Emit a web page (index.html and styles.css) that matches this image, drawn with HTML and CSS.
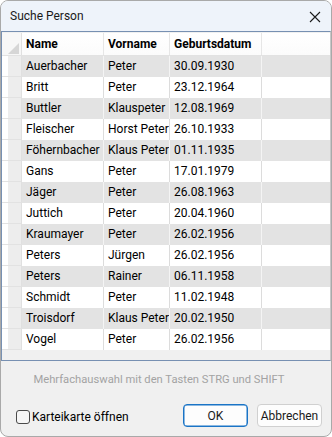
FILE: index.html
```html
<!DOCTYPE html>
<html lang="de">
<head>
<meta charset="utf-8">
<title>Suche Person</title>
<link rel="stylesheet" href="styles.css">
</head>
<body>
<div class="window">
  <div class="titlebar">
    <span class="title">Suche Person</span>
    <svg class="close" width="12" height="12" viewBox="0 0 12 12"><path d="M1 1 L11 11 M11 1 L1 11" stroke="#1b1b1b" stroke-width="1.1" fill="none"/></svg>
  </div>
  <div class="grid">
    <div class="row hdr">
      <div class="rh"><svg class="tri" width="11" height="11" viewBox="0 0 11 11"><path d="M11 0 L11 11 L0 11 Z" fill="#d6d6d6"/></svg></div>
      <div class="c">Name</div><div class="c">Vorname</div><div class="c">Geburtsdatum</div><div class="c f"></div>
    </div>
    <div class="row alt"><div class="rh"></div><div class="c">Auerbacher</div><div class="c">Peter</div><div class="c">30.09.1930</div><div class="c f"></div></div>
    <div class="row"><div class="rh"></div><div class="c">Britt</div><div class="c">Peter</div><div class="c">23.12.1964</div><div class="c f"></div></div>
    <div class="row alt"><div class="rh"></div><div class="c">Buttler</div><div class="c">Klauspeter</div><div class="c">12.08.1969</div><div class="c f"></div></div>
    <div class="row"><div class="rh"></div><div class="c">Fleischer</div><div class="c">Horst Peter</div><div class="c">26.10.1933</div><div class="c f"></div></div>
    <div class="row alt"><div class="rh"></div><div class="c">Föhernbacher</div><div class="c">Klaus Peter</div><div class="c">01.11.1935</div><div class="c f"></div></div>
    <div class="row"><div class="rh"></div><div class="c">Gans</div><div class="c">Peter</div><div class="c">17.01.1979</div><div class="c f"></div></div>
    <div class="row alt"><div class="rh"></div><div class="c">Jäger</div><div class="c">Peter</div><div class="c">26.08.1963</div><div class="c f"></div></div>
    <div class="row"><div class="rh"></div><div class="c">Juttich</div><div class="c">Peter</div><div class="c">20.04.1960</div><div class="c f"></div></div>
    <div class="row alt"><div class="rh"></div><div class="c">Kraumayer</div><div class="c">Peter</div><div class="c">26.02.1956</div><div class="c f"></div></div>
    <div class="row"><div class="rh"></div><div class="c">Peters</div><div class="c">Jürgen</div><div class="c">26.02.1956</div><div class="c f"></div></div>
    <div class="row alt"><div class="rh"></div><div class="c">Peters</div><div class="c">Rainer</div><div class="c">06.11.1958</div><div class="c f"></div></div>
    <div class="row"><div class="rh"></div><div class="c">Schmidt</div><div class="c">Peter</div><div class="c">11.02.1948</div><div class="c f"></div></div>
    <div class="row alt"><div class="rh"></div><div class="c">Troisdorf</div><div class="c">Klaus Peter</div><div class="c">20.02.1950</div><div class="c f"></div></div>
    <div class="row"><div class="rh"></div><div class="c">Vogel</div><div class="c">Peter</div><div class="c">26.02.1956</div><div class="c f"></div></div>
  </div>
  <div class="hint">Mehrfachauswahl mit den Tasten STRG und SHIFT</div>
  <div class="footer">
    <label class="check"><span class="box"></span><span>Karteikarte öffnen</span></label>
    <div class="buttons">
      <button class="btn ok">OK</button>
      <button class="btn">Abbrechen</button>
    </div>
  </div>
</div>
</body>
</html>
```
FILE: styles.css
```css
html, body {
  margin: 0;
  padding: 0;
  background: #ffffff;
}
body {
  font-family: Roboto, "Noto Sans", sans-serif;
  font-size: 12px;
  color: #000;
}
.window {
  width: 332px;
  height: 437px;
  box-sizing: border-box;
  border: 1px solid #a9a9a9;
  border-radius: 8px;
  background: #f0f0f0;
  overflow: hidden;
  display: flex;
  flex-direction: column;
}
.titlebar {
  height: 30px;
  flex: none;
  background: #eef3fa;
  display: flex;
  align-items: center;
  justify-content: space-between;
  padding: 0 10px 0 9px;
  color: #1a1a1a;
  font-size: 12px;
}
.close { margin-top: 1px; }
.grid {
  height: 330px;
  flex: none;
  box-sizing: border-box;
  border: 1px solid #7790b2;
  border-right-color: #c8c8c8;
  background: #f0f0f0;
  padding-top: 1px;
}
.row {
  display: grid;
  grid-template-columns: 20px 82px 66px 92px 1fr;
  height: 21px;
  background: #ffffff;
}
.row.alt { background: #e3e3e3; }
.row.hdr {
  height: 22px;
  background: linear-gradient(#ffffff, #fbfbfb);
  border-bottom: 1px solid #e2e2e2;
  font-weight: 700;
}
.c {
  padding-left: 4px;
  line-height: 21px;
  white-space: nowrap;
  overflow: hidden;
  border-right: 1px solid #dcdcdc;
}
.row.alt .c { border-right-color: #f4f4f4; }
.hdr .c {
  line-height: 22px;
  border-right-color: #e6e6e6;
  padding-left: 4px;
}
.c.f { border-right: none; }
.rh {
  background: linear-gradient(to right, #ffffff 0 6px, #ededed 6px);
  border-bottom: 1px solid #e2e2e2;
  box-sizing: border-box;
  border-right: 1px solid #e0e0e0;
}
.hdr .rh {
  background: #f7f7f7;
  position: relative;
  border-bottom: none;
}
.tri {
  position: absolute;
  right: 2px;
  bottom: 1px;
}
.hint {
  text-align: center;
  color: #a3a3a3;
  font-size: 11.2px;
  margin-top: 12px;
  padding-right: 14px;
  height: 18px;
}
.footer {
  display: flex;
  justify-content: space-between;
  align-items: center;
  padding: 13px 9px 0 15px;
}
.check {
  display: flex;
  align-items: center;
  gap: 2px;
  font-size: 12px;
  margin-top: 2px;
}
.box {
  width: 12px;
  height: 12px;
  border: 1px solid #4a4a4a;
  border-radius: 3px;
  background: #f6f6f6;
}
.buttons {
  display: flex;
  gap: 9px;
}
.btn {
  font-family: Roboto, "Noto Sans", sans-serif;
  font-size: 12px;
  height: 23px;
  width: 65px;
  padding: 0;
  background: #fdfdfd;
  border: 1px solid #d0d0d0;
  border-radius: 4px;
  color: #1a1a1a;
}
.btn.ok {
  border-color: #1a74c6;
  box-shadow: inset 0 0 0 0.5px #1a74c6;
}
```
